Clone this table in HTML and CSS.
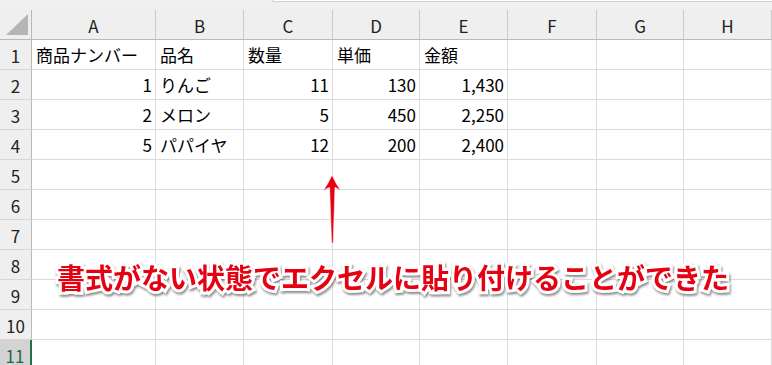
FILE: index.html
```html
<!DOCTYPE html>
<html lang="ja">
<head>
  <meta charset="UTF-8" />
  <meta name="viewport" content="width=device-width, initial-scale=1.0"/>
  <title>Sheet1</title>
  <link rel="stylesheet" href="styles.css">
</head>
<body>
  <div class="topbar"><span class="formula"></span></div>

  <div class="sheet">
    <div class="cell corner"><span class="tri"></span></div>
    <div class="cell col-head">A</div>
    <div class="cell col-head">B</div>
    <div class="cell col-head">C</div>
    <div class="cell col-head">D</div>
    <div class="cell col-head">E</div>
    <div class="cell col-head">F</div>
    <div class="cell col-head">G</div>
    <div class="cell col-head">H</div>

    <div class="cell row-head">1</div>
    <div class="cell">商品ナンバー</div>
    <div class="cell">品名</div>
    <div class="cell">数量</div>
    <div class="cell">単価</div>
    <div class="cell">金額</div>
    <div class="cell"></div><div class="cell"></div><div class="cell"></div>

    <div class="cell row-head">2</div>
    <div class="cell num">1</div>
    <div class="cell">りんご</div>
    <div class="cell num">11</div>
    <div class="cell num">130</div>
    <div class="cell num">1,430</div>
    <div class="cell"></div><div class="cell"></div><div class="cell"></div>

    <div class="cell row-head">3</div>
    <div class="cell num">2</div>
    <div class="cell">メロン</div>
    <div class="cell num">5</div>
    <div class="cell num">450</div>
    <div class="cell num">2,250</div>
    <div class="cell"></div><div class="cell"></div><div class="cell"></div>

    <div class="cell row-head">4</div>
    <div class="cell num">5</div>
    <div class="cell">パパイヤ</div>
    <div class="cell num">12</div>
    <div class="cell num">200</div>
    <div class="cell num">2,400</div>
    <div class="cell"></div><div class="cell"></div><div class="cell"></div>

    <div class="cell row-head">5</div>
    <div class="cell"></div><div class="cell"></div><div class="cell"></div><div class="cell"></div>
    <div class="cell"></div><div class="cell"></div><div class="cell"></div><div class="cell"></div>

    <div class="cell row-head">6</div>
    <div class="cell"></div><div class="cell"></div><div class="cell"></div><div class="cell"></div>
    <div class="cell"></div><div class="cell"></div><div class="cell"></div><div class="cell"></div>

    <div class="cell row-head">7</div>
    <div class="cell"></div><div class="cell"></div><div class="cell"></div><div class="cell"></div>
    <div class="cell"></div><div class="cell"></div><div class="cell"></div><div class="cell"></div>

    <div class="cell row-head">8</div>
    <div class="cell"></div><div class="cell"></div><div class="cell"></div><div class="cell"></div>
    <div class="cell"></div><div class="cell"></div><div class="cell"></div><div class="cell"></div>

    <div class="cell row-head">9</div>
    <div class="cell"></div><div class="cell"></div><div class="cell"></div><div class="cell"></div>
    <div class="cell"></div><div class="cell"></div><div class="cell"></div><div class="cell"></div>

    <div class="cell row-head">10</div>
    <div class="cell"></div><div class="cell"></div><div class="cell"></div><div class="cell"></div>
    <div class="cell"></div><div class="cell"></div><div class="cell"></div><div class="cell"></div>

    <div class="cell row-head selected">11</div>
    <div class="cell"></div><div class="cell"></div><div class="cell"></div><div class="cell"></div>
    <div class="cell"></div><div class="cell"></div><div class="cell"></div><div class="cell"></div>
  </div>

  <!-- callout over the sheet -->
  <svg class="arrow" width="24" height="76" viewBox="0 0 24 76">
    <path d="M12 3 Q8 12 3 19 Q7 16 9.6 15.5 L11.6 71 L13.2 71 L15 15.5 Q17.5 16 21 19 Q16 12 12 3 Z" />
  </svg>
  <p class="note">書式がない状態でエクセルに貼り付けることができた</p>
</body>
</html>
```

FILE: styles.css
```css
body {
  margin: 0;
  background: #f0f0f0;
  font-family: "Noto Sans CJK JP", "Noto Sans", sans-serif;
  overflow: hidden;
  position: relative;
  width: 772px;
  height: 365px;
}
.topbar {
  height: 10px;
  background: #f0f0f0;
}
.formula {
  display: block;
  margin-left: 272px;
  height: 1px;
  background: #fff;
  border-bottom: 1px solid #cfcfcf;
  border-left: 1px solid #cfcfcf;
  border-bottom-left-radius: 3px;
}
.sheet {
  display: grid;
  grid-template-columns: 32px 124px 88px 89px 87px 88px 89px 87px 88px;
  grid-auto-rows: 30px;
  background: #fff;
}
.cell {
  box-sizing: border-box;
  border-right: 1px solid #dadada;
  border-bottom: 1px solid #dadada;
  font-size: 17px;
  color: #000;
  display: flex;
  align-items: center;
  padding: 0 3px 0 4px;
  white-space: nowrap;
  overflow: hidden;
}
.num {
  justify-content: flex-end;
}
.col-head,
.corner {
  background: #efefef;
  justify-content: center;
  border-right-color: #c9c9c9;
  border-bottom-color: #b9b9b9;
  color: #222;
  padding: 2px 0 0;
}
.corner {
  position: relative;
  border-right-color: #b9b9b9;
}
.tri {
  position: absolute;
  left: 6px;
  bottom: 4px;
  width: 22px;
  height: 21px;
  background: #b5b5b5;
  clip-path: polygon(100% 0, 100% 100%, 0 100%);
}
.row-head {
  background: #efefef;
  justify-content: center;
  border-right-color: #b9b9b9;
  border-bottom-color: #d6d6d6;
  color: #222;
  padding: 2px 0 0;
}
.row-head.selected {
  background: #d3d3d3;
  color: #1e6b45;
  border-right: 2px solid #217346;
}
.arrow {
  position: absolute;
  left: 320px;
  top: 172px;
}
.arrow path {
  fill: #e50012;
  stroke: #fff;
  stroke-width: 0.6;
}
.note {
  position: absolute;
  left: 57px;
  top: 263px;
  margin: 0;
  font-size: 28px;
  line-height: 28px;
  font-weight: 700;
  color: #e50012;
  -webkit-text-stroke: 6px #fff;
  paint-order: stroke fill;
  filter: drop-shadow(1px 2px 1px rgba(0, 0, 0, 0.45));
  white-space: nowrap;
}
```
